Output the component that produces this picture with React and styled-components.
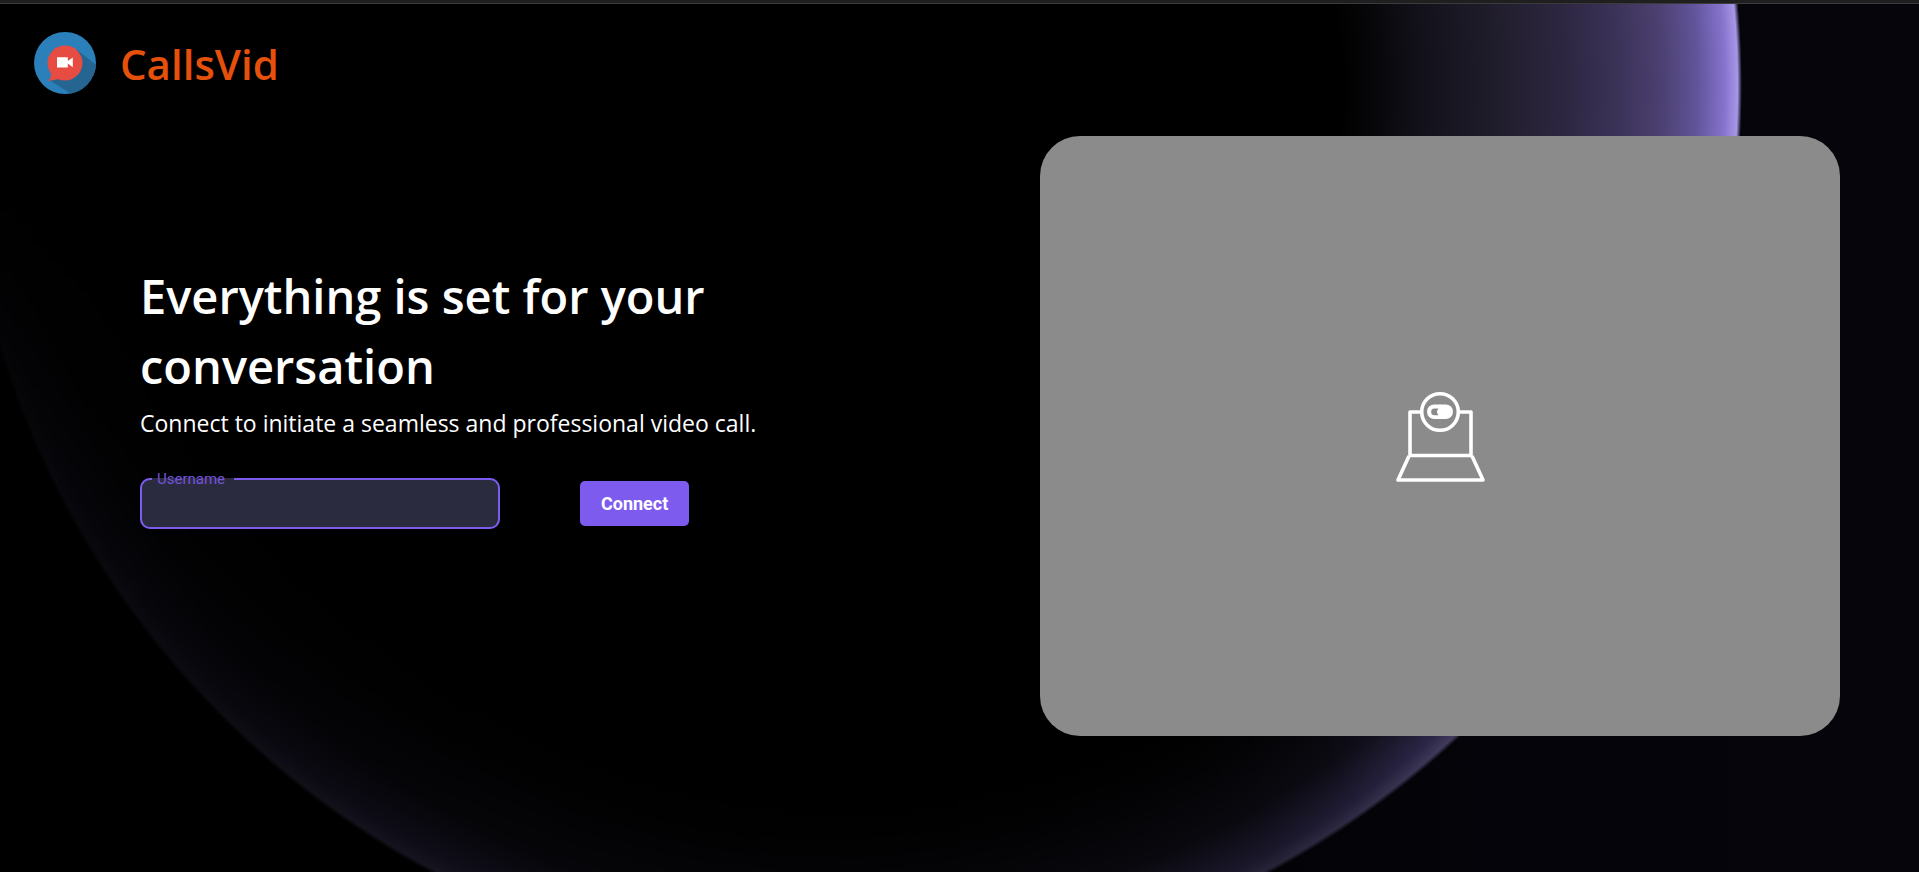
import React from "react";
import styled, { createGlobalStyle } from "styled-components";

const GlobalStyle = createGlobalStyle`
  *, *::before, *::after { box-sizing: border-box; }
  body { margin: 0; background: #000; }
`;

const Page = styled.div`
  position: relative;
  min-height: 100vh;
  overflow: hidden;
  display: flex;
  flex-direction: column;
  color: #fff;
  font-family: "Open Sans", sans-serif;
  background: linear-gradient(to right, #000 40%, #05040a 80%, #06050c);
`;

/* Planet with a purple rim: a broad glow facing right, a thin one round the base. */
const Planet = styled.div`
  position: absolute;
  left: -2vw;
  top: calc(86px - 46.25vw);
  width: 92.6vw;
  height: 92.6vw;
  border-radius: 50%;
  background: #000;

  &::before,
  &::after {
    content: "";
    position: absolute;
    inset: -3px;
    border-radius: 50%;
  }

  &::before {
    background: radial-gradient(
      closest-side,
      #000 55%, #07070a 59%, #12111a 64%, #1f1c2a 72%, #2d2640 80%,
      #3b3258 86%, #4b4070 91%, #62549a 95%, #8472cc 98%, #a797e6 99.5%,
      rgba(120, 100, 230, 0) 100%
    );
    mask-image: conic-gradient(
      #000 0deg, #000 97deg, rgba(0, 0, 0, 0.5) 112deg,
      rgba(0, 0, 0, 0.14) 130deg, transparent 146deg, transparent 300deg, #000 360deg
    );
  }

  &::after {
    background: radial-gradient(
      closest-side,
      transparent 80%, rgba(66, 60, 100, 0.15) 86%, rgba(78, 70, 120, 0.4) 93%,
      rgba(98, 86, 160, 0.85) 98%, #7d70b0 99.5%, rgba(90, 80, 150, 0) 100%
    );
    mask-image: conic-gradient(
      transparent 0deg, transparent 96deg, rgba(0, 0, 0, 0.6) 120deg,
      rgba(0, 0, 0, 0.48) 137deg, rgba(0, 0, 0, 0.32) 151deg,
      rgba(0, 0, 0, 0.22) 180deg, rgba(0, 0, 0, 0.18) 208deg,
      rgba(0, 0, 0, 0.1) 226deg, rgba(0, 0, 0, 0.06) 245deg, transparent 265deg
    );
  }
`;

const TopStrip = styled.div`
  position: relative;
  height: 4px;
  background: #1f1f1f;
  border-bottom: 1px solid #3c3c3c;
`;

const Header = styled.header`
  position: relative;
  display: flex;
  align-items: center;
  gap: 24px;
  padding: 28px 34px 0;
`;

const BrandName = styled.span`
  padding-top: 2px;
  color: #e5500b;
  font-size: 42px;
  font-weight: 600;
  line-height: 60px;
`;

const Main = styled.main`
  position: relative;
  flex: 1;
  display: grid;
  grid-template-columns: minmax(0, 1fr) minmax(0, 800px);
  gap: 60px;
  align-items: start;
  padding: 42px 79px 42px 140px;
`;

const Intro = styled.section`
  max-width: 640px;
  padding-top: 125px;
`;

const Title = styled.h1`
  margin: 0;
  font-size: 47px;
  font-weight: 600;
  line-height: 70px;
`;

const Subtitle = styled.p`
  margin: 0;
  font-size: 23px;
  line-height: 44px;
  white-space: nowrap;
`;

const ConnectForm = styled.form`
  display: flex;
  align-items: center;
  gap: 80px;
  margin-top: 33px;
`;

const Field = styled.div`
  position: relative;
  width: 360px;
  height: 51px;
`;

const Outline = styled.fieldset`
  position: absolute;
  inset: 0;
  margin: 0;
  padding: 0 10px;
  border: 2px solid #7e5bef;
  border-radius: 10px;
  background: #2b2b40;
  pointer-events: none;
`;

const Notch = styled.legend`
  width: 82px;
  height: 2px;
  padding: 0;
`;

const FieldLabel = styled.label`
  position: absolute;
  top: -8px;
  left: 17px;
  color: #7553dc;
  font: 400 15px/18px Roboto, sans-serif;
`;

const TextInput = styled.input`
  position: relative;
  width: 100%;
  height: 100%;
  padding: 0 16px;
  border: 0;
  outline: 0;
  background: transparent;
  color: #fff;
  font: 400 18px Roboto, sans-serif;
`;

const Button = styled.button`
  height: 45px;
  padding: 0 21px;
  border: 0;
  border-radius: 5px;
  background: #7e5bef;
  color: #fff;
  font: 700 18px Roboto, sans-serif;
  cursor: pointer;
`;

const Preview = styled.section`
  display: flex;
  align-items: center;
  justify-content: center;
  aspect-ratio: 4 / 3;
  border-radius: 40px;
  background: #8b8b8c;
`;

function Logo() {
  return (
    <svg width="62" height="62" viewBox="0 0 62 62" aria-hidden="true">
      <defs>
        <clipPath id="disc">
          <circle cx="31" cy="31" r="31" />
        </clipPath>
      </defs>
      <g clipPath="url(#disc)">
        <rect width="62" height="62" fill="#2b80b9" />
        <path d="M43 18 L66 36 V66 H44 L15 48 Z" fill="#246592" />
      </g>
      <circle cx="31" cy="31" r="17.5" fill="#e74c43" />
      <path d="M17 39 Q18 45 14 49 Q22 48 28 46 Z" fill="#e74c43" />
      <path d="M23 25.2h10.8v3.8l5-3.6v9.8l-5-3.8v4H23z" fill="#fff" />
    </svg>
  );
}

function WebcamIcon() {
  return (
    <svg width="90" height="92" viewBox="25 19 90 92" fill="none" stroke="#fff" strokeWidth="3.6" strokeLinejoin="round" role="img" aria-label="Camera off">
      <path d="M51 41H40V84.5H101V41H89" />
      <path d="M39 85L28 109H113L102 85" />
      <circle cx="70" cy="41" r="18.3" />
      <rect x="57" y="33.5" width="26" height="14.5" rx="7.2" fill="#fff" stroke="none" />
      <path d="M68.5 37.6H64.5a3.3 3.3 0 0 0 0 6.6H68.5Q65.5 41 68.5 37.6Z" fill="#8b8b8c" stroke="none" />
    </svg>
  );
}

export default function App() {
  return (
    <>
      <GlobalStyle />
      <Page>
        <Planet />
        <TopStrip />
        <Header>
          <Logo />
          <BrandName>CallsVid</BrandName>
        </Header>
        <Main>
          <Intro>
            <Title>Everything is set for your conversation</Title>
            <Subtitle>Connect to initiate a seamless and professional video call.</Subtitle>
            <ConnectForm onSubmit={(e) => e.preventDefault()}>
              <Field>
                <Outline aria-hidden="true">
                  <Notch />
                </Outline>
                <TextInput id="username" type="text" />
                <FieldLabel htmlFor="username">Username</FieldLabel>
              </Field>
              <Button type="submit">Connect</Button>
            </ConnectForm>
          </Intro>
          <Preview>
            <WebcamIcon />
          </Preview>
        </Main>
      </Page>
    </>
  );
}
